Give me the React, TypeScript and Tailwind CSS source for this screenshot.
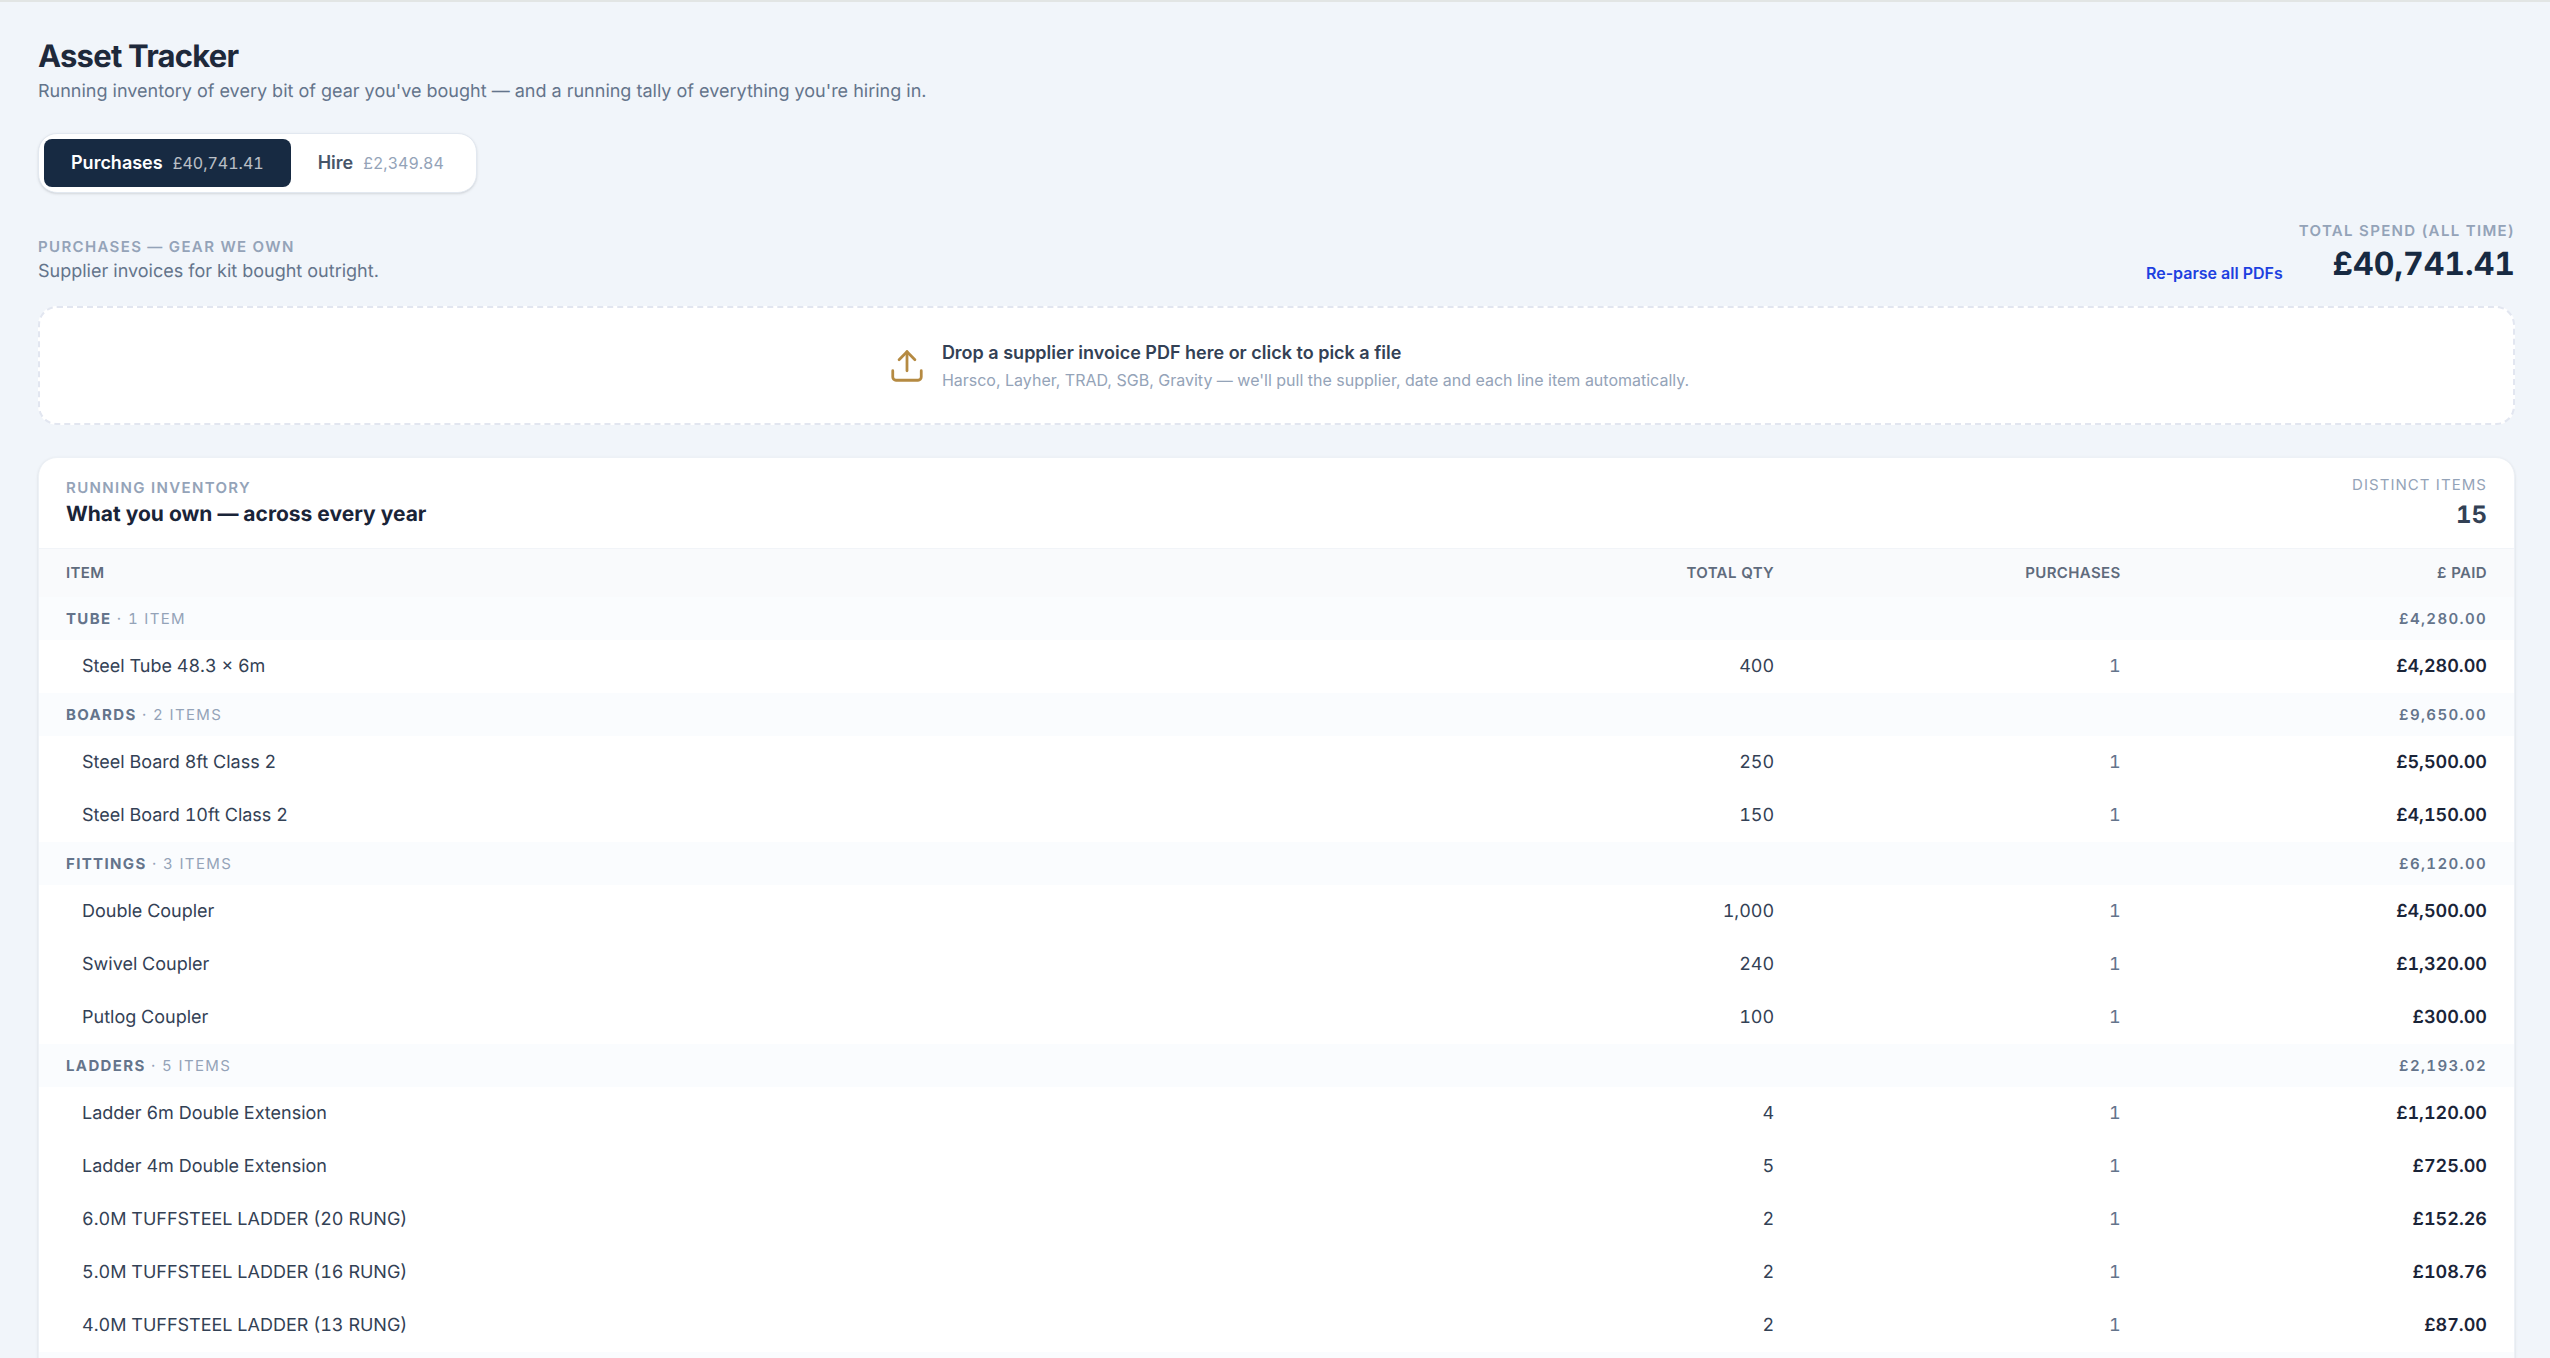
import { Upload } from 'lucide-react';

const groups = [
  {
    name: 'Tube',
    count: '1 item',
    total: '£4,280.00',
    items: [{ name: 'Steel Tube 48.3 × 6m', qty: '400', purchases: 1, paid: '£4,280.00' }],
  },
  {
    name: 'Boards',
    count: '2 items',
    total: '£9,650.00',
    items: [
      { name: 'Steel Board 8ft Class 2', qty: '250', purchases: 1, paid: '£5,500.00' },
      { name: 'Steel Board 10ft Class 2', qty: '150', purchases: 1, paid: '£4,150.00' },
    ],
  },
  {
    name: 'Fittings',
    count: '3 items',
    total: '£6,120.00',
    items: [
      { name: 'Double Coupler', qty: '1,000', purchases: 1, paid: '£4,500.00' },
      { name: 'Swivel Coupler', qty: '240', purchases: 1, paid: '£1,320.00' },
      { name: 'Putlog Coupler', qty: '100', purchases: 1, paid: '£300.00' },
    ],
  },
  {
    name: 'Ladders',
    count: '5 items',
    total: '£2,193.02',
    items: [
      { name: 'Ladder 6m Double Extension', qty: '4', purchases: 1, paid: '£1,120.00' },
      { name: 'Ladder 4m Double Extension', qty: '5', purchases: 1, paid: '£725.00' },
      { name: '6.0M TUFFSTEEL LADDER (20 RUNG)', qty: '2', purchases: 1, paid: '£152.26' },
      { name: '5.0M TUFFSTEEL LADDER (16 RUNG)', qty: '2', purchases: 1, paid: '£108.76' },
      { name: '4.0M TUFFSTEEL LADDER (13 RUNG)', qty: '2', purchases: 1, paid: '£87.00' },
    ],
  },
];

function InventoryTable() {
  return (
    <table className="w-full table-fixed text-[18px] leading-[26px] tabular-nums">
      <colgroup>
        <col />
        <col className="w-[14%]" />
        <col className="w-[14%]" />
        <col className="w-[14.8%]" />
      </colgroup>
      <thead className="bg-[#f9fafc] text-[15px] uppercase tracking-wide text-[#5f6b7d]">
        <tr className="h-12">
          <th scope="col" className="px-[27px] text-left font-semibold">Item</th>
          <th scope="col" className="px-[27px] text-right font-semibold">Total qty</th>
          <th scope="col" className="px-[27px] text-right font-semibold">Purchases</th>
          <th scope="col" className="px-[27px] text-right font-semibold">£ Paid</th>
        </tr>
      </thead>
      {groups.map((group) => (
        <tbody key={group.name}>
          <tr className="h-[43px] bg-[#fafcfe] text-[15px] uppercase tracking-[0.09em] text-[#64748b]">
            <th scope="rowgroup" colSpan={3} className="px-[27px] text-left font-bold">
              {group.name} <span className="font-normal text-[#94a3b8]">· {group.count}</span>
            </th>
            <td className="px-[27px] text-right font-semibold">{group.total}</td>
          </tr>
          {group.items.map((item) => (
            <tr key={item.name} className="h-[53px]">
              <td className="pl-[43px] text-[#334155]">{item.name}</td>
              <td className="px-[27px] text-right text-[#334155]">{item.qty}</td>
              <td className="px-[27px] text-right text-[#64748b]">{item.purchases}</td>
              <td className="px-[27px] text-right font-semibold text-[#1a2438]">{item.paid}</td>
            </tr>
          ))}
        </tbody>
      ))}
      <tfoot>
        <tr className="h-[43px] bg-[#fafcfe]">
          <td colSpan={4}></td>
        </tr>
      </tfoot>
    </table>
  );
}

export default function App() {
  return (
    <div className="h-screen overflow-hidden border-t-2 border-[#e2e5e4] bg-[#f1f5fa] pt-[33px] pr-[35px] pl-[38px] font-['Inter',sans-serif] [text-rendering:geometricPrecision]">
      <header>
        <h1 className="text-[31px] leading-[44px] font-bold tracking-tight text-[#1e293b]">Asset Tracker</h1>
        <p className="text-[18px] leading-[26px] text-[#64748b]">
          Running inventory of every bit of gear you've bought — and a running tally of everything you're hiring in.
        </p>
      </header>

      <div className="mt-7 inline-flex rounded-[19px] border border-[#e2e8f0] bg-white p-[5px] shadow-sm">
        <button className="flex items-center gap-[10px] rounded-[8px] bg-[#172a42] px-[27px] py-[11px] text-[18px] leading-[26px] font-semibold text-white">
          Purchases <span className="text-[16px] font-normal tabular-nums opacity-70">£40,741.41</span>
        </button>
        <button className="flex items-center gap-[10px] rounded-[8px] px-[27px] py-[11px] text-[18px] leading-[26px] font-semibold text-[#475569]">
          Hire <span className="text-[16px] font-normal tabular-nums text-[#94a3b8]">£2,349.84</span>
        </button>
      </div>

      <section className="mt-[26px] flex items-end justify-between">
        <div>
          <h2 className="text-[15px] leading-[24px] font-semibold uppercase tracking-[0.09em] text-[#94a3b8]">Purchases — gear we own</h2>
          <p className="text-[18px] leading-[26px] text-[#64748b]">Supplier invoices for kit bought outright.</p>
        </div>
        <div className="flex items-end gap-4">
          <button className="text-[16px] leading-[24px] font-semibold text-[#1d40e0]">Re-parse all PDFs</button>
          <div className="text-right">
            <p className="text-[15px] leading-[24px] font-semibold uppercase tracking-[0.09em] text-[#94a3b8]">Total spend (all time)</p>
            <p className="text-[32px] leading-[42px] font-bold tabular-nums text-[#172a42]">£40,741.41</p>
          </div>
        </div>
      </section>

      <button className="mt-[21px] flex h-[119px] w-full items-center justify-center gap-4 rounded-[19px] border-2 border-dashed border-[#e2e6f0] bg-white pl-6 text-left">
        <Upload strokeWidth={1.75} className="size-[38px] text-[#b58a42]" />
        <span>
          <span className="block text-[18px] leading-[28px] font-semibold text-[#334155]">Drop a supplier invoice PDF here or click to pick a file</span>
          <span className="block text-[16px] leading-[26px] text-[#94a3b8]">
            Harsco, Layher, TRAD, SGB, Gravity — we'll pull the supplier, date and each line item automatically.
          </span>
        </span>
      </button>

      <section className="mt-8 overflow-hidden rounded-[19px] border border-[#edf1f6] bg-white shadow-sm">
        <div className="flex h-[91px] items-center justify-between border-b border-[#f1f4f8] px-[27px]">
          <div>
            <p className="text-[15px] leading-[24px] font-semibold uppercase tracking-[0.09em] text-[#94a3b8]">Running inventory</p>
            <h2 className="text-[21px] leading-[30px] font-bold text-[#1a2438]">What you own — across every year</h2>
          </div>
          <div className="text-right">
            <p className="text-[15px] leading-[24px] uppercase tracking-[0.07em] text-[#94a3b8]">Distinct items</p>
            <p className="text-[24px] leading-[36px] font-bold tabular-nums text-[#334155]">15</p>
          </div>
        </div>
        <InventoryTable />
      </section>
    </div>
  );
}
